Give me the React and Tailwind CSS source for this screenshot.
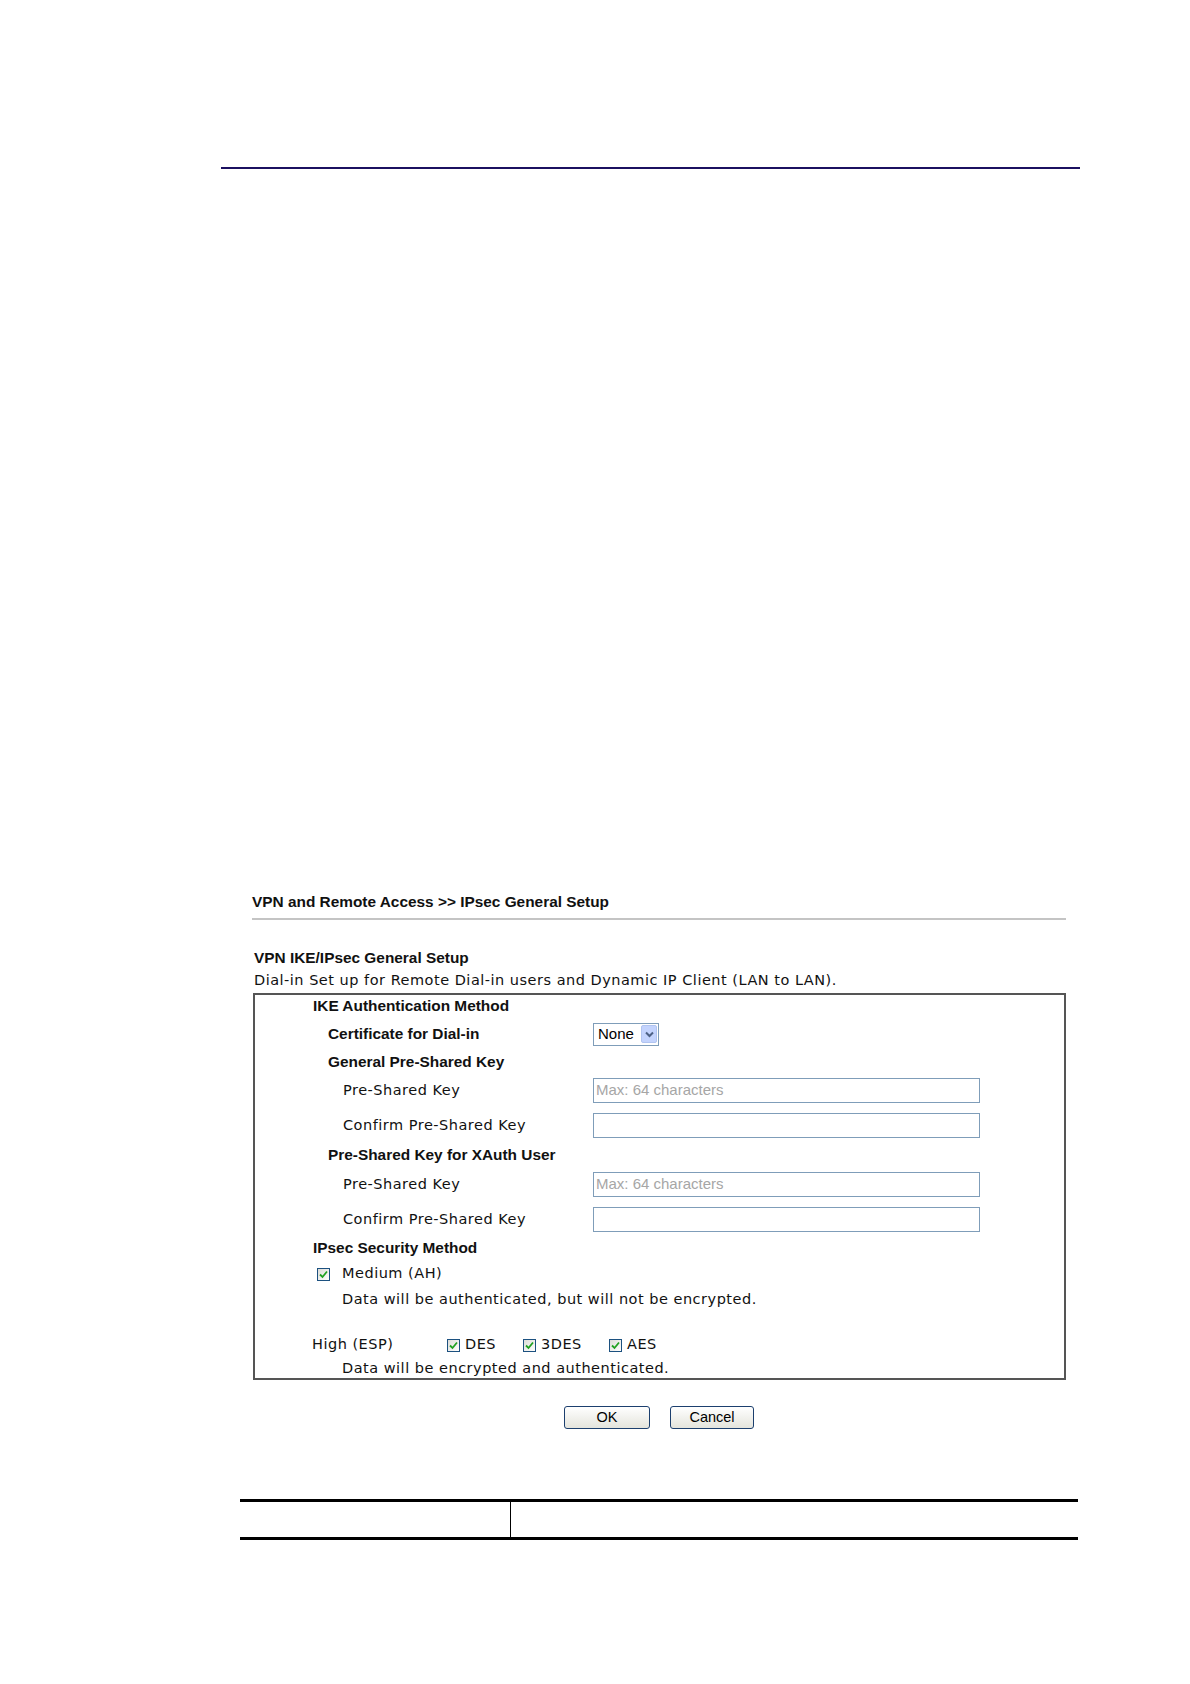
import React from 'react';

const bold = "font-['Liberation_Sans',Arial,sans-serif] font-bold text-[15.4px] text-[#111]";
const reg = "font-['DejaVu_Sans',Verdana,sans-serif] text-[14.5px] tracking-[0.5px] text-[#111]";

const Check = () => (
  <span className="inline-flex items-center justify-center w-[13px] h-[13px] border border-[#1c5180] bg-gradient-to-br from-[#dcdcd7] to-white">
    <svg width="9" height="9" viewBox="0 0 9 9">
      <path d="M1 4.5 L3.5 7 L8 1.5" fill="none" stroke="#21a121" strokeWidth="1.8" />
    </svg>
  </span>
);

const TextBox = ({ placeholder }) => (
  <div className="w-[387px] h-[25px] border border-[#7f9db9] bg-white flex items-center px-[2px]">
    <span className="font-['Liberation_Sans',Arial,sans-serif] text-[15px] text-[#a6a6a6]">{placeholder}</span>
  </div>
);

// one row of the IKE box: label column then control column
const Row = ({ h, mt, pad, label, labelClass, children }) => (
  <div className={`flex items-center ${h} ${mt}`}>
    <div className={`w-[338px] shrink-0 ${pad} ${labelClass}`}>{label}</div>
    {children}
  </div>
);

const XpButton = ({ w, children }) => (
  <button className={`${w} h-[23px] rounded-[3px] border border-[#1c3f6e] bg-gradient-to-b from-white to-[#e4e4dc] font-['Liberation_Sans',Arial,sans-serif] text-[14.5px] text-black leading-none`}>
    {children}
  </button>
);

export default function App() {
  return (
    <div className="w-[1190px] min-h-[1684px] bg-white pt-[167px]">
      <div className="ml-[221px] w-[859px] h-[2px] bg-[#1b1060]" />

      <div className="ml-[252px] w-[814px] mt-[723px]">
        <div className={`h-[20px] flex items-center ${bold}`}>VPN and Remote Access &gt;&gt; IPsec General Setup</div>
        <div className="mt-[6px] h-[2px] bg-[#c4c4c4]" />

        <div className={`mt-[28px] h-[20px] flex items-center pl-[2px] ${bold}`}>VPN IKE/IPsec General Setup</div>
        <div className={`mt-[4px] h-[18px] flex items-center pl-[2px] ${reg}`}>
          Dial-in Set up for Remote Dial-in users and Dynamic IP Client (LAN to LAN).
        </div>

        <div className="mt-[3px] ml-[1px] w-[813px] border-2 border-[#555] bg-white pt-[3px]">
          <Row h="h-[16px]" mt="" pad="pl-[58px]" labelClass={bold} label="IKE Authentication Method" />
          <Row h="h-[24px]" mt="mt-[8px]" pad="pl-[73px]" labelClass={bold} label="Certificate for Dial-in">
            <div className="w-[66px] h-[23px] border border-[#7f9db9] bg-white flex items-center justify-between pl-[4px] pr-[1px]">
              <span className="font-['Liberation_Sans',Arial,sans-serif] text-[15px] text-black">None</span>
              <span className="w-[16px] h-[18px] bg-[#c3d3fd] border border-[#b1c4f0] rounded-[2px] flex items-center justify-center">
                <svg width="9" height="7" viewBox="0 0 9 7">
                  <path d="M1 1.5 L4.5 5 L8 1.5" fill="none" stroke="#4d6185" strokeWidth="2" />
                </svg>
              </span>
            </div>
          </Row>
          <Row h="h-[20px]" mt="mt-[6px]" pad="pl-[73px]" labelClass={bold} label="General Pre-Shared Key" />
          <Row h="h-[25px]" mt="mt-[6px]" pad="pl-[88px]" labelClass={reg} label="Pre-Shared Key">
            <TextBox placeholder="Max: 64 characters" />
          </Row>
          <Row h="h-[25px]" mt="mt-[10px]" pad="pl-[88px]" labelClass={reg} label="Confirm Pre-Shared Key">
            <TextBox />
          </Row>
          <Row h="h-[20px]" mt="mt-[7px]" pad="pl-[73px]" labelClass={bold} label="Pre-Shared Key for XAuth User" />
          <Row h="h-[25px]" mt="mt-[7px]" pad="pl-[88px]" labelClass={reg} label="Pre-Shared Key">
            <TextBox placeholder="Max: 64 characters" />
          </Row>
          <Row h="h-[25px]" mt="mt-[10px]" pad="pl-[88px]" labelClass={reg} label="Confirm Pre-Shared Key">
            <TextBox />
          </Row>
          <Row h="h-[20px]" mt="mt-[6px]" pad="pl-[58px]" labelClass={bold} label="IPsec Security Method" />

          <div className={`h-[20px] mt-[6px] flex items-center pl-[62px] ${reg}`}>
            <Check />
            <span className="ml-[12px]">Medium (AH)</span>
          </div>
          <div className={`h-[20px] mt-[6px] flex items-center pl-[87px] ${reg}`}>
            Data will be authenticated, but will not be encrypted.
          </div>

          <div className={`h-[20px] mt-[25px] flex items-center pl-[57px] ${reg}`}>
            <span className="w-[135px] shrink-0">High (ESP)</span>
            <span className="w-[76px] shrink-0 flex items-center"><Check /><span className="ml-[5px]">DES</span></span>
            <span className="w-[86px] shrink-0 flex items-center"><Check /><span className="ml-[5px]">3DES</span></span>
            <span className="flex items-center"><Check /><span className="ml-[5px]">AES</span></span>
          </div>
          <div className={`h-[19px] mt-[4px] flex items-center pl-[87px] ${reg}`}>
            Data will be encrypted and authenticated.
          </div>
        </div>

        <div className="mt-[26px] flex justify-center gap-[20px]">
          <XpButton w="w-[86px]">OK</XpButton>
          <XpButton w="w-[84px]">Cancel</XpButton>
        </div>
      </div>

      <div className="mt-[70px] ml-[240px] w-[838px] h-[41px] border-t-[3px] border-b-[3px] border-black flex">
        <div className="w-[271px] border-r border-black" />
        <div className="flex-1" />
      </div>
    </div>
  );
}
